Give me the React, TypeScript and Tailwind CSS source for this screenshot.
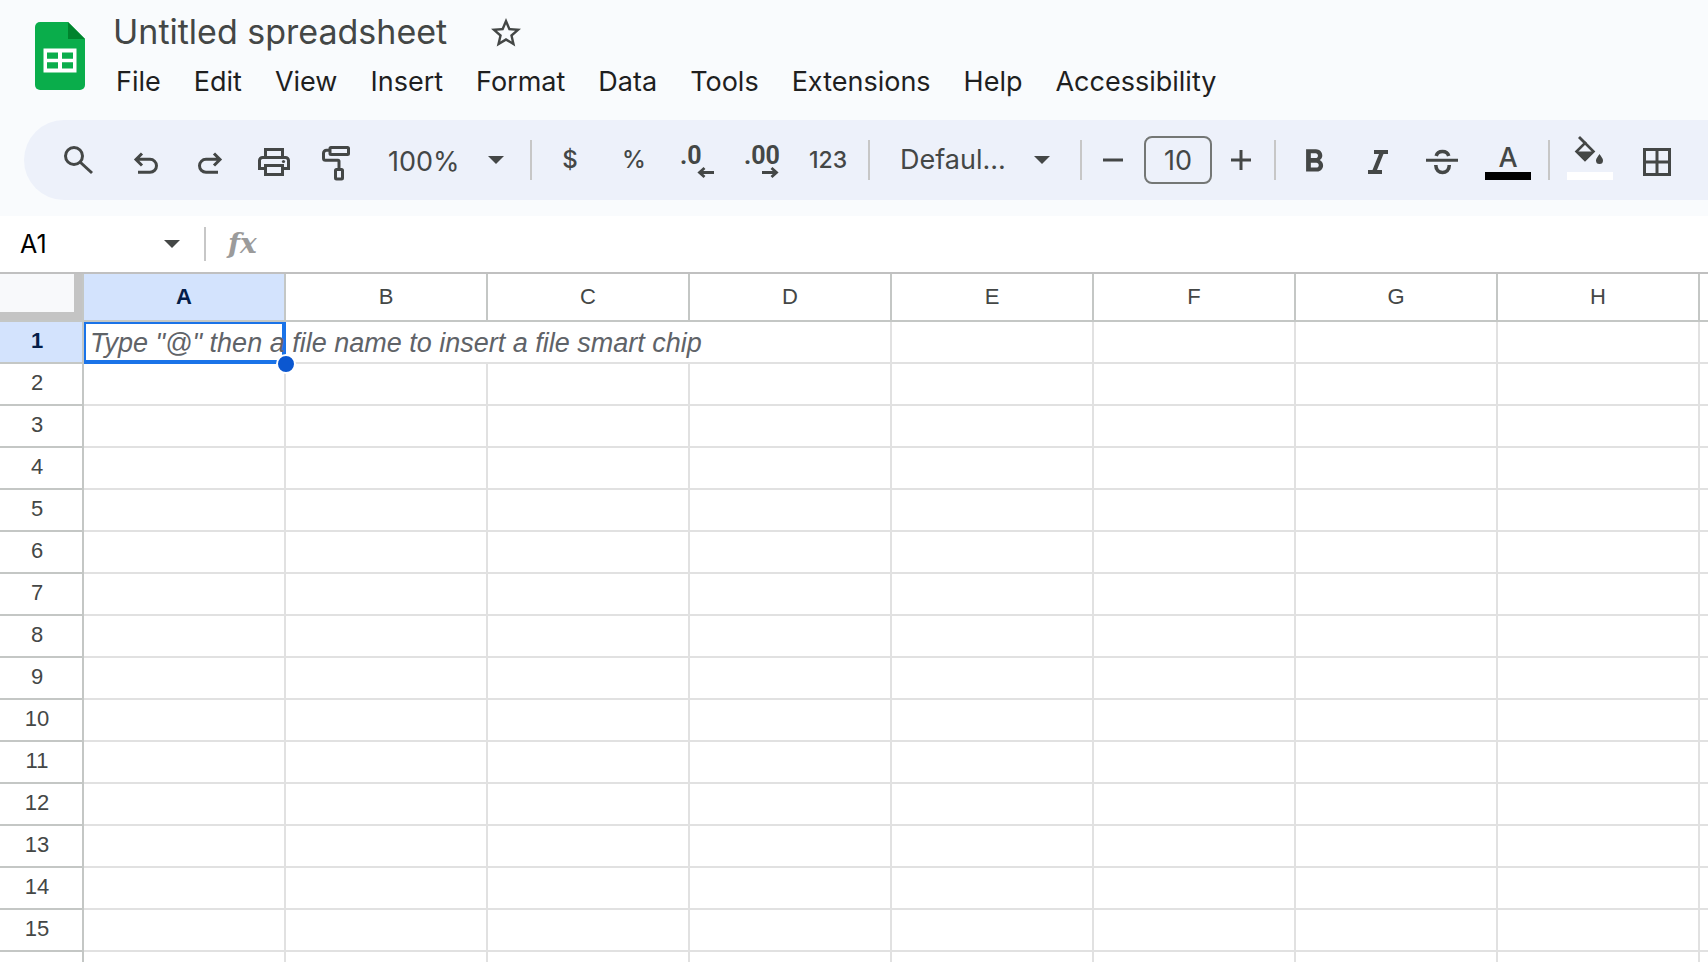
import type { ReactNode } from "react";
import { MdStarBorder, MdFormatBold } from "react-icons/md";

const MENUS = ["File", "Edit", "View", "Insert", "Format", "Data", "Tools", "Extensions", "Help", "Accessibility"];
const COLUMNS = ["A", "B", "C", "D", "E", "F", "G", "H"];
const ROWS = Array.from({ length: 15 }, (_, i) => i + 1);

function Icon({ children, filled = false }: { children: ReactNode; filled?: boolean }) {
  return (
    <svg
      viewBox="0 0 32 32"
      className="size-8 shrink-0 overflow-visible"
      fill={filled ? "currentColor" : "none"}
      stroke={filled ? "none" : "currentColor"}
      strokeWidth={3}
      aria-hidden="true"
    >
      {children}
    </svg>
  );
}

function Caret() {
  return (
    <svg viewBox="0 0 16 8" className="pointer-events-none h-2 w-4 shrink-0" fill="currentColor" aria-hidden="true">
      <path d="M0 0h16L8 8z" />
    </svg>
  );
}

function ToolButton({ label, width = "w-16", children }: { label: string; width?: string; children: ReactNode }) {
  return (
    <button type="button" aria-label={label} className={`flex h-11 shrink-0 items-center justify-center ${width}`}>
      {children}
    </button>
  );
}

function Divider() {
  return <div className="mx-1.5 h-10 w-0.5 shrink-0 bg-[#c7c7c7]" />;
}

function Header() {
  return (
    <header className="flex h-[120px] shrink-0 items-start pl-[35px]">
      <a href="#home" aria-label="Sheets home" className="mt-[22px] shrink-0">
        <svg viewBox="0 0 50 68" className="h-[68px] w-[50px]" aria-hidden="true">
          <path d="M5 0h28l17 17v46a5 5 0 0 1-5 5H5a5 5 0 0 1-5-5V5a5 5 0 0 1 5-5z" fill="#0aad4b" />
          <path d="M33 0l17 17H33z" fill="#00832d" />
          <path
            d="M8.500 26.500h33v24h-33zM12 30.500v6.200h11v-6.200zm15 0v6.200h11v-6.200zM12 40.300v6.200h11v-6.200zm15 0v6.200h11v-6.200z"
            fill="#fff"
            fillRule="evenodd"
          />
        </svg>
      </a>
      <div className="ml-7 min-w-0 pt-3">
        <div className="flex h-10 items-center">
          <input
            aria-label="Document title"
            defaultValue="Untitled spreadsheet"
            className="h-10 w-[340px] bg-transparent text-[34px] leading-10 text-[#444746] outline-none"
          />
          <button type="button" aria-label="Star" className="mt-0.5 ml-[35px] text-[#444746]">
            <MdStarBorder className="size-9" />
          </button>
        </div>
        <nav className="mt-2.5 flex h-10 items-center gap-[33px] pl-[3px]">
          {MENUS.map((menu) => (
            <button key={menu} type="button" className="text-[27px] leading-10 text-[#1f1f1f]">
              {menu}
            </button>
          ))}
        </nav>
      </div>
    </header>
  );
}

function Toolbar() {
  return (
    <div
      role="toolbar"
      aria-label="Main"
      className="ml-6 flex h-20 shrink-0 items-center overflow-hidden rounded-l-full bg-[#edf1fa] pl-[18px] text-[#444746]"
    >
      <ToolButton label="Search the menus" width="w-[72px]">
        <Icon>
          <circle cx="12" cy="12" r="8.500" />
          <path d="M18 18l12 11" />
        </Icon>
      </ToolButton>
      <ToolButton label="Undo">
        <Icon>
          <path d="M12 9.500l-6 6 6 6M6 15.300h14a6.500 6.500 0 0 1 0 13H8" />
        </Icon>
      </ToolButton>
      <ToolButton label="Redo">
        <Icon>
          <path d="M20 9.500l6 6-6 6M26 15.300H12a6.500 6.500 0 0 0 0 13h12" />
        </Icon>
      </ToolButton>
      <ToolButton label="Print">
        <Icon>
          <path d="M7.500 13V5.500h17V13M7.500 24.500h-6v-8a3 3 0 0 1 3-3h23a3 3 0 0 1 3 3v8h-6M7.500 21.500h17v9h-17z" />
          <circle cx="25.500" cy="17.500" r="1.600" fill="currentColor" stroke="none" />
        </Icon>
      </ToolButton>
      <ToolButton label="Paint format">
        <Icon>
          <rect x="8" y="3.500" width="18.500" height="7" rx="1" />
          <path d="M8 6.300H4.500a3 3 0 0 0-3 3v5a2 2 0 0 0 2 2H16a1 1 0 0 1 1 1V25" />
          <rect x="13.500" y="25.500" width="7" height="9.500" rx="1" />
        </Icon>
      </ToolButton>
      <div className="relative flex h-11 w-[154px] shrink-0 items-center justify-end pr-5">
        <select
          aria-label="Zoom"
          className="absolute inset-0 w-full appearance-none bg-transparent pt-1 pl-[18px] text-[27px] leading-10 outline-none"
        >
          <option>100%</option>
        </select>
        <Caret />
      </div>
      <Divider />
      <ToolButton label="Format as currency">
        <span className="text-[24px] font-medium">$</span>
      </ToolButton>
      <ToolButton label="Format as percent">
        <span className="text-[24px] font-medium">%</span>
      </ToolButton>
      <ToolButton label="Decrease decimal places">
        <Icon filled>
          <text x="-2" y="20" className="font-[Roboto] text-[25px] font-bold">
            .0
          </text>
          <path d="M17 28.500h15M22.500 24l-5 4.500 5 4.500" fill="none" stroke="currentColor" strokeWidth={2.800} />
        </Icon>
      </ToolButton>
      <ToolButton label="Increase decimal places">
        <Icon filled>
          <text x="-2" y="20" className="font-[Roboto] text-[25px] font-bold">
            .00
          </text>
          <path d="M16 28.500h15M25.500 24l5 4.500-5 4.500" fill="none" stroke="currentColor" strokeWidth={2.800} />
        </Icon>
      </ToolButton>
      <ToolButton label="More formats" width="w-[68px]">
        <span className="text-[23px] font-medium">123</span>
      </ToolButton>
      <Divider />
      <div className="relative flex h-11 w-[198px] shrink-0 items-center justify-end pr-6">
        <select
          aria-label="Font"
          className="absolute inset-0 w-full appearance-none bg-transparent pl-6 text-[27px] leading-10 outline-none"
        >
          <option>Defaul...</option>
        </select>
        <Caret />
      </div>
      <Divider />
      <ToolButton label="Decrease font size" width="w-[50px]">
        <Icon>
          <path d="M6 16h20" />
        </Icon>
      </ToolButton>
      <input
        aria-label="Font size"
        defaultValue="10"
        className="mx-1.5 h-12 w-[68px] shrink-0 rounded-lg border-2 border-[#747775] bg-transparent text-center text-[27px] outline-none"
      />
      <ToolButton label="Increase font size" width="w-[50px]">
        <Icon>
          <path d="M4 16h20M14 6v20" />
        </Icon>
      </ToolButton>
      <Divider />
      <ToolButton label="Bold">
        <MdFormatBold className="mt-1 size-[38px]" />
      </ToolButton>
      <ToolButton label="Italic">
        <Icon filled>
          <path d="M12 6h14v4h-4.500L15 26h5v4H6v-4h4.500L17 10h-5z" />
        </Icon>
      </ToolButton>
      <ToolButton label="Strikethrough">
        <Icon>
          <path d="M0 16.200h32" />
          <path d="M10.200 12c1.500-6 11-6 12.500 0M9.800 21c0 10 13.500 10 13.500 0" strokeWidth={3.600} />
        </Icon>
      </ToolButton>
      <ToolButton label="Text color" width="w-[68px]">
        <span className="flex h-11 flex-col items-center justify-end pb-0.5">
          <span className="text-[27px] leading-7 font-medium">A</span>
          <span className="h-2 w-[46px] bg-black" />
        </span>
      </ToolButton>
      <Divider />
      <ToolButton label="Fill color" width="w-[68px]">
        <span className="flex h-11 flex-col items-center justify-end gap-2 pb-0.5">
          <Icon>
            <path d="M5 5l7 7" strokeWidth={2.800} />
            <path d="M11 11l8.500 8.500-8.500 8.500L2.500 19.500z" strokeWidth={2.600} />
            <path d="M2 19.500h18l-9 9.500z" fill="currentColor" stroke="none" />
            <path d="M25.500 22c2 3 3.500 4.500 3.500 6.500a3.500 3.500 0 0 1-7 0c0-2 1.500-3.500 3.500-6.500z" fill="currentColor" stroke="none" />
          </Icon>
          <span className="h-2 w-[46px] shrink-0 bg-white" />
        </span>
      </ToolButton>
      <ToolButton label="Borders">
        <Icon>
          <path d="M4.500 5.500h25v25h-25zM17 5v26M4 18h26" />
        </Icon>
      </ToolButton>
    </div>
  );
}

function FormulaBar() {
  return (
    <div className="mt-4 flex h-14 shrink-0 items-center bg-white text-[#444746]">
      <input
        aria-label="Name box"
        defaultValue="A1"
        className="h-10 w-[164px] bg-transparent pl-5 text-[25px] text-black outline-none"
      />
      <button type="button" aria-label="Named ranges" className="mr-6">
        <Caret />
      </button>
      <div className="h-[34px] w-0.5 bg-[#c7c7c7]" />
      <label
        htmlFor="formula"
        className="ml-[22px] font-['DejaVu_Serif'] text-[28px] leading-8 font-bold text-[#9b9b9b] italic"
      >
        fx
      </label>
      <input id="formula" aria-label="Formula" className="ml-4 h-10 min-w-0 flex-1 bg-transparent text-[27px] outline-none" />
    </div>
  );
}

function Sheet() {
  return (
    <div className="min-h-0 flex-1 overflow-hidden border-t-2 border-[#c0c0c0] bg-white font-['Liberation_Sans',sans-serif]">
      <table className="w-full table-fixed border-separate border-spacing-0 text-[22px] leading-7 text-[#444746]">
        <colgroup>
          <col className="w-[84px]" />
          {COLUMNS.map((c) => (
            <col key={c} className="w-[202px]" />
          ))}
          <col />
        </colgroup>
        <thead>
          <tr className="h-12">
            <td className="border-r-2 border-b-2 border-[#c4c7c5] p-0">
              <div className="h-[46px] border-r-8 border-b-8 border-[#c4c4c4] bg-[#f8f9fb]" />
            </td>
            {COLUMNS.map((c, i) => (
              <th
                key={c}
                scope="col"
                className={`border-r-2 border-b-2 border-[#c4c7c5] p-0 ${
                  i === 0 ? "bg-[#d3e3fd] font-bold text-[#041e49]" : "font-normal"
                }`}
              >
                {c}
              </th>
            ))}
            <td className="border-b-2 border-[#c4c7c5] p-0" />
          </tr>
        </thead>
        <tbody>
          {ROWS.map((n) => (
            <tr key={n} className="h-[42px]">
              <th
                scope="row"
                className={`border-r-2 border-b-2 border-[#c4c7c5] pt-0 pr-2 pb-0.5 pl-0 ${
                  n === 1 ? "bg-[#d3e3fd] font-bold text-[#041e49]" : "font-normal"
                }`}
              >
                {n}
              </th>
              {COLUMNS.map((c, i) =>
                n === 1 && i === 0 ? (
                  <td key={c} className="relative p-0">
                    <div className="absolute inset-0 border-2 border-r-4 border-b-4 border-[#1a73e8]" />
                    <p className="relative w-0 pl-1.5 text-[27px] whitespace-nowrap text-[#5f6368] italic">
                      Type "@" then a file name to insert a file smart chip
                    </p>
                    <span className="absolute -right-2.5 -bottom-2.5 z-10 size-5 rounded-full border-2 border-white bg-[#0b57d0]" />
                  </td>
                ) : (
                  <td
                    key={c}
                    className={`border-b-2 border-[#e1e1e1] p-0 ${n === 1 && i < 3 ? "" : "border-r-2"}`}
                  />
                ),
              )}
              <td className="border-b-2 border-[#e1e1e1] p-0" />
            </tr>
          ))}
          <tr className="h-[42px]">
            <td className="border-r-2 border-[#c4c7c5] p-0" />
            {COLUMNS.map((c) => (
              <td key={c} className="border-r-2 border-[#e1e1e1] p-0" />
            ))}
            <td className="p-0" />
          </tr>
        </tbody>
      </table>
    </div>
  );
}

export default function App() {
  return (
    <main className="flex h-screen flex-col overflow-hidden bg-[#f9fbfd] font-[Inter,sans-serif]">
      <Header />
      <Toolbar />
      <FormulaBar />
      <Sheet />
    </main>
  );
}
